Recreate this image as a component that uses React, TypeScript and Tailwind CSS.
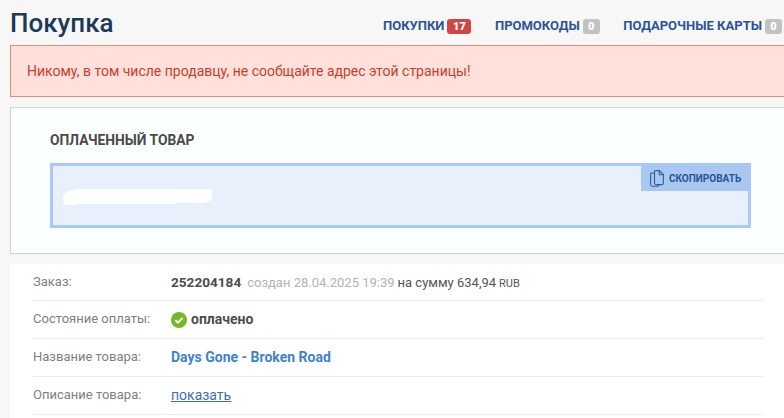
const font = { fontFamily: 'Roboto, "Noto Sans", sans-serif' };

function Tab({ label, count, active }: { label: string; count: string; active?: boolean }) {
  return (
    <a className="flex items-center gap-[3px] text-[13px] font-bold uppercase leading-[16px] text-[#2a5499]">
      {label}
      <span
        className={`flex h-[15px] items-center justify-center rounded-[3px] px-[4px] text-[11px] font-black leading-none text-white ${
          active ? 'min-w-[24px] bg-[#d14545]' : 'min-w-[17px] bg-[#c2c2c2]'
        }`}
      >
        {count}
      </span>
    </a>
  );
}

function Row({ label, first, children }: { label: string; first?: boolean; children: React.ReactNode }) {
  return (
    <div className={`flex items-center border-b border-[#e9ebee] text-[14px] ${first ? 'h-[37px]' : 'h-[38px]'}`}>
      <div className={`w-[138px] shrink-0 text-[13px] text-[#808080] ${first ? 'mb-0' : 'mb-[2px]'}`}>{label}</div>
      <div className="flex items-center">{children}</div>
    </div>
  );
}

export default function App() {
  return (
    <div className="h-[418px] w-[784px] overflow-hidden bg-[#f7f7f7]" style={font}>
      <div className="w-[800px] pl-[10px]">
        {/* header */}
        <div className="flex h-[45px] w-[772px] items-center justify-between">
          <h1 className="text-[26px] font-medium leading-[32px] text-[#1b3a57]">Покупка</h1>
          <div className="mt-[7px] flex gap-[23.5px]">
            <Tab label="Покупки" count="17" active />
            <Tab label="Промокоды" count="0" />
            <Tab label="Подарочные карты" count="0" />
          </div>
        </div>

        {/* warning */}
        <div className="flex h-[52px] items-center border border-[#ed8a73] bg-[#ffe0db] pl-[16px] text-[14px] text-[#c8402c]">
          Никому, в том числе продавцу, не сообщайте адрес этой страницы!
        </div>

        {/* paid item */}
        <div className="mt-[10px] h-[147px] border border-[#d0d5d6] bg-[#fcffff] pl-[39px] pt-[24px]">
          <h2 className="text-[13.8px] font-bold uppercase leading-[16px] text-[#4a4a4a]">Оплаченный товар</h2>
          <div className="relative mt-[15px] h-[65px] w-[701px] border-[3px] border-[#a6c9f8] bg-[#e7f0fb] pl-[10px] pt-[23px]">
            <svg width="150" height="17" viewBox="0 0 150 17" className="block">
              <path d="M5 2 L17 0 H149 V11 L141 14 H115 L113 15 H14 L12 16 H1 L0 6 Z" fill="#ffffff" />
            </svg>
            <div className="absolute right-0 top-0 flex h-[25px] w-[107px] items-center gap-[5px] bg-[#a9c8f0] pl-[9px] text-[10px] font-bold uppercase text-[#2a5499]">
              <svg width="14" height="17" viewBox="0 0 14 17" fill="none" stroke="#2a5fa8" strokeWidth="1.1" strokeLinejoin="round">
                <path d="M4.5 3 H1.8 Q.6 3 .6 4.2 V14.6 Q.6 16.2 2.2 16.2 H7.5 Q9 16.2 9.4 14.8" />
                <path d="M4.5 2 Q4.5 .6 5.8 .6 H9.5 L13.4 4.6 V12.8 Q13.4 14.6 11.8 14.6 H6 Q4.5 14.6 4.5 13 Z" />
                <path d="M9.3 .8 V4.8 H13.2" />
              </svg>
              Скопировать
            </div>
          </div>
        </div>

        {/* order details */}
        <div className="mt-[10px] h-[160px] bg-white pl-[23px]">
          <div className="w-[730px]">
            <Row label="Заказ:" first>
              <div className="flex items-baseline">
                <b className="text-[13.6px] font-bold text-[#4d4d4d]">252204184</b>
                <span className="ml-[6px] text-[13px] text-[#b3b3b3]">создан 28.04.2025 19:39</span>
                <span className="ml-[3px] text-[13px] text-[#555555]">на сумму 634,94</span>
                <span className="ml-[3px] text-[11px] text-[#555555]">RUB</span>
              </div>
            </Row>
            <Row label="Состояние оплаты:">
              <svg width="16" height="16" viewBox="0 0 16 16" className="mr-[4px]">
                <circle cx="8" cy="8" r="8" fill="#76b82a" />
                <path d="M4.4 8.2 L7 10.7 L11.6 5.9" fill="none" stroke="#fff" strokeWidth="2" />
              </svg>
              <b className="text-[14px] font-bold text-[#4d4d4d]">оплачено</b>
            </Row>
            <Row label="Название товара:">
              <a className="text-[14px] font-bold text-[#3d82cf]">Days Gone - Broken Road</a>
            </Row>
            <Row label="Описание товара:">
              <a className="text-[14px] text-[#3d6fb0] underline">показать</a>
            </Row>
          </div>
        </div>
      </div>
    </div>
  );
}
